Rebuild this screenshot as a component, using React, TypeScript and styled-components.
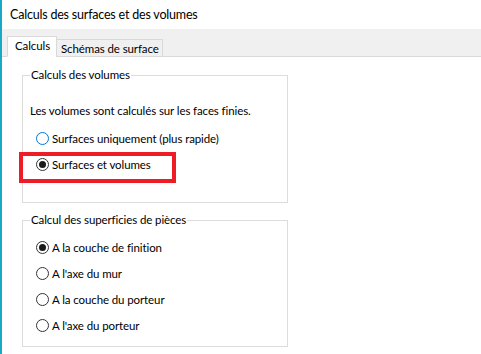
import React from 'react';
import styled, { createGlobalStyle } from 'styled-components';

const GlobalStyle = createGlobalStyle`
  html, body {
    margin: 0;
    padding: 0;
    background: #ffffff;
  }
  body {
    font-family: Lato, 'Liberation Sans', sans-serif;
    font-size: 11.5px;
    letter-spacing: -0.1px;
    color: #000000;
  }
`;

const Window = styled.div`
  display: flex;
  width: 481px;
  height: 354px;
  overflow: hidden;
  border-left: 2px solid #17a9c6;
  box-sizing: border-box;
`;

const Content = styled.div`
  flex: 1;
  display: flex;
  flex-direction: column;
`;

const TitleBar = styled.div`
  height: 29px;
  display: flex;
  align-items: center;
  padding-left: 8px;
  font-size: 12.5px;
  letter-spacing: -0.2px;
`;

const TabStrip = styled.div`
  height: 28px;
  box-sizing: border-box;
  background: #f0f0f0;
  border-bottom: 1px solid #d9d9d9;
  display: flex;
  align-items: flex-end;
  padding-left: 5px;
`;

const Tab = styled.div<{ $active?: boolean }>`
  box-sizing: border-box;
  display: flex;
  align-items: center;
  border: 1px solid #d9d9d9;
  margin-bottom: -1px;
  height: ${(p) => (p.$active ? '21px' : '18px')};
  padding: ${(p) => (p.$active ? '0 6px 2px 7px' : '0 3px 0 4px')};
  background: ${(p) => (p.$active ? '#ffffff' : '#f0f0f0')};
  border-bottom-color: ${(p) => (p.$active ? '#ffffff' : '#d9d9d9')};
  margin-left: ${(p) => (p.$active ? '0' : '-1px')};
`;

const TabPanel = styled.div`
  flex: 1;
  display: flex;
  flex-direction: column;
  padding: 10px 0 0 20px;
  gap: 9px;
`;

const GroupBox = styled.fieldset<{ $top: number; $bottom: number }>`
  width: 266px;
  box-sizing: border-box;
  margin: 0;
  border: 1px solid #dcdcdc;
  padding: ${(p) => `${p.$top}px 0 ${p.$bottom}px 7px`};
  display: flex;
  flex-direction: column;
`;

const Legend = styled.legend`
  padding: 0 1px;
  line-height: 16px;
`;

const Description = styled.div`
  line-height: 16px;
  margin: 0 0 6px 0;
`;

const OptionRow = styled.label`
  position: relative;
  height: 26px;
  display: flex;
  align-items: center;
  gap: 3px;
  padding-left: 6px;
`;

const RadioCircle = styled.span<{ $checked?: boolean; $focused?: boolean }>`
  width: 13px;
  height: 13px;
  box-sizing: border-box;
  border-radius: 50%;
  border: 1px solid ${(p) => (p.$focused ? '#0078d7' : '#333333')};
  background: #ffffff;
  display: flex;
  align-items: center;
  justify-content: center;
  flex-shrink: 0;

  &::after {
    content: '';
    display: ${(p) => (p.$checked ? 'block' : 'none')};
    width: 7px;
    height: 7px;
    border-radius: 50%;
    background: #1a1a1a;
  }
`;

const Highlight = styled.span`
  position: absolute;
  left: -11px;
  top: 1px;
  width: 157px;
  height: 31px;
  box-sizing: border-box;
  border: 4px solid #ee1c25;
  pointer-events: none;
`;

interface OptionProps {
  label: string;
  checked?: boolean;
  focused?: boolean;
  highlighted?: boolean;
}

function Option({ label, checked, focused, highlighted }: OptionProps) {
  return (
    <OptionRow>
      <RadioCircle $checked={checked} $focused={focused} />
      <span>{label}</span>
      {highlighted && <Highlight />}
    </OptionRow>
  );
}

export default function App() {
  return (
    <>
      <GlobalStyle />
      <Window>
        <Content>
          <TitleBar>Calculs des surfaces et des volumes</TitleBar>
          <TabStrip>
            <Tab $active>Calculs</Tab>
            <Tab>Schémas de surface</Tab>
          </TabStrip>
          <TabPanel>
            <GroupBox $top={20} $bottom={25}>
              <Legend>Calculs des volumes</Legend>
              <Description>Les volumes sont calculés sur les faces finies.</Description>
              <Option label="Surfaces uniquement (plus rapide)" focused />
              <Option label="Surfaces et volumes" checked highlighted />
            </GroupBox>
            <GroupBox $top={6} $bottom={8}>
              <Legend>Calcul des superficies de pièces</Legend>
              <Option label="A la couche de finition" checked />
              <Option label="A l'axe du mur" />
              <Option label="A la couche du porteur" />
              <Option label="A l'axe du porteur" />
            </GroupBox>
          </TabPanel>
        </Content>
      </Window>
    </>
  );
}
